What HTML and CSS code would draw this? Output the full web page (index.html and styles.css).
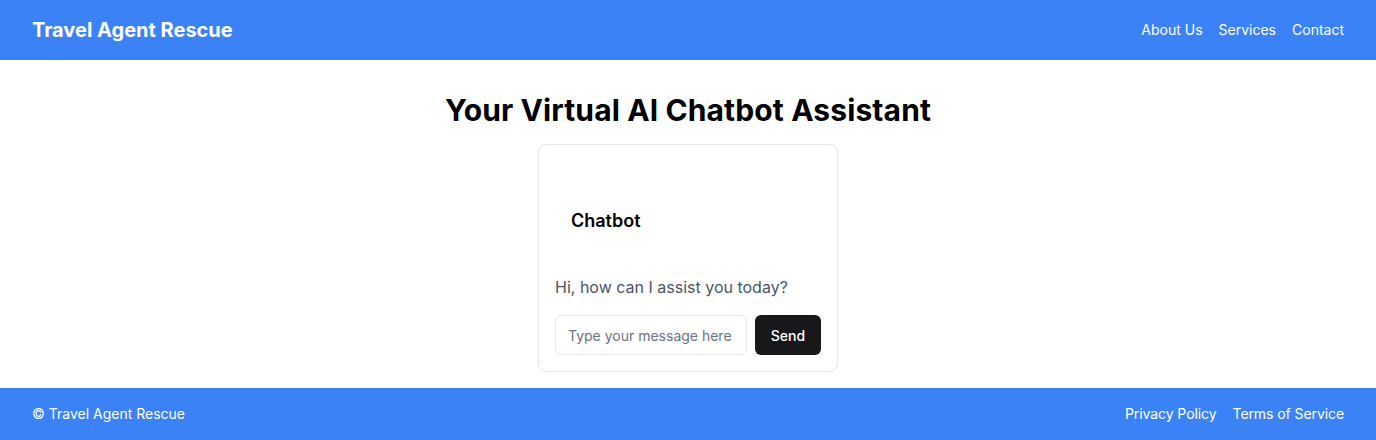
FILE: index.html
```html
<!DOCTYPE html>
<html lang="en">
<head>
<meta charset="utf-8">
<title>Travel Agent Rescue</title>
<link rel="stylesheet" href="styles.css">
</head>
<body>
<div class="page">
  <header class="topbar">
    <div class="brand">Travel Agent Rescue</div>
    <nav class="nav">
      <a href="#">About Us</a>
      <a href="#">Services</a>
      <a href="#">Contact</a>
    </nav>
  </header>
  <main class="main">
    <h1 class="title">Your Virtual AI Chatbot Assistant</h1>
    <section class="card">
      <div class="card-header">
        <h2 class="card-title">Chatbot</h2>
      </div>
      <p class="message">Hi, how can I assist you today?</p>
      <form class="composer">
        <input class="input" type="text" placeholder="Type your message here">
        <button class="send" type="button">Send</button>
      </form>
    </section>
  </main>
  <footer class="footer">
    <div class="copy">© Travel Agent Rescue</div>
    <nav class="nav">
      <a href="#">Privacy Policy</a>
      <a href="#">Terms of Service</a>
    </nav>
  </footer>
</div>
</body>
</html>
```
FILE: styles.css
```css
* { box-sizing: border-box; }
html, body { margin: 0; padding: 0; }
body {
  font-family: Inter, "Noto Sans", sans-serif;
  background: #ffffff;
  color: #000;
}
.page {
  display: flex;
  flex-direction: column;
  min-height: 440px;
}
.topbar {
  height: 60px;
  background: #3b82f6;
  color: #fff;
  display: flex;
  align-items: center;
  justify-content: space-between;
  padding: 0 32px;
}
.brand {
  font-size: 20px;
  font-weight: 700;
  line-height: 28px;
}
.nav {
  display: flex;
  gap: 16px;
}
.nav a {
  color: #fff;
  text-decoration: none;
  font-size: 14px;
  line-height: 20px;
}
.footer .nav a {
  letter-spacing: -0.08px;
}
.main {
  flex: 1;
  display: flex;
  flex-direction: column;
  align-items: center;
  padding: 32px 0 16px;
}
.title {
  margin: 0 0 16px;
  font-size: 30px;
  line-height: 36px;
  font-weight: 700;
  letter-spacing: 0.12px;
}
.card {
  width: 300px;
  border: 1px solid #e5e7eb;
  border-radius: 8px;
  padding: 16px;
  background: #fff;
}
.card-header {
  padding: 46px 16px 40px;
}
.card-title {
  margin: 0;
  font-size: 18px;
  line-height: 28px;
  font-weight: 600;
}
.message {
  margin: 0 0 16px;
  font-size: 16px;
  line-height: 24px;
  color: #4b5563;
}
.composer {
  display: flex;
  gap: 8px;
  margin: 0;
}
.input {
  flex: 1;
  min-width: 0;
  height: 40px;
  border: 1px solid #e5e7eb;
  border-radius: 6px;
  padding: 0 12px;
  font-family: inherit;
  font-size: 14px;
  color: #111;
  outline: none;
}
.input::placeholder { color: #6b7280; }
.send {
  width: 66px;
  height: 40px;
  border: 0;
  border-radius: 6px;
  background: #18181b;
  color: #fff;
  font-family: inherit;
  font-size: 14px;
  font-weight: 500;
}
.footer {
  height: 52px;
  background: #3b82f6;
  color: #fff;
  display: flex;
  align-items: center;
  justify-content: space-between;
  padding: 0 32px;
}
.copy {
  font-size: 14px;
  line-height: 20px;
}
```
